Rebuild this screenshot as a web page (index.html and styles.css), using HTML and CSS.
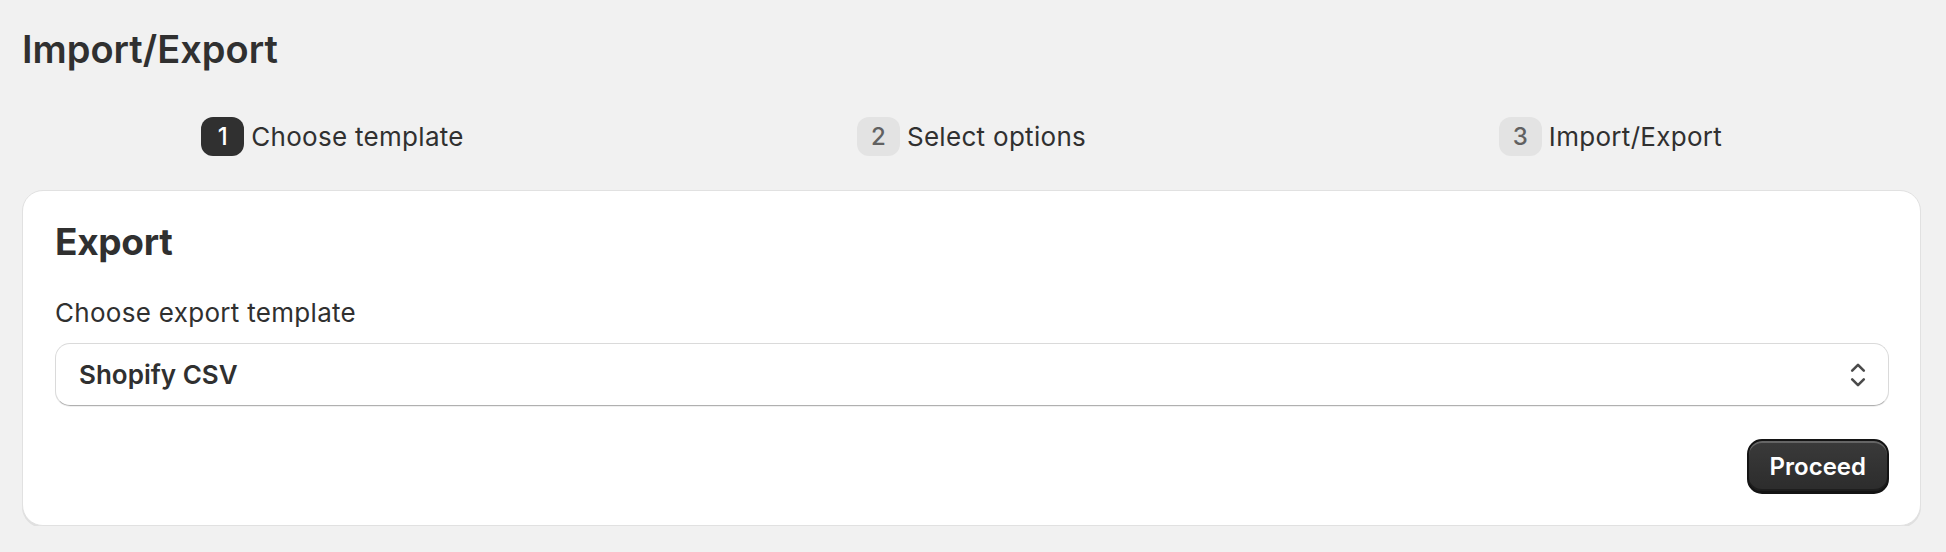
FILE: index.html
```html
<!DOCTYPE html>
<html lang="en">
<head>
<meta charset="utf-8">
<title>Import/Export</title>
<link rel="stylesheet" href="styles.css">
</head>
<body>
<main class="page">
  <h1 class="page-title">Import/Export</h1>
  <ol class="steps">
    <li class="step step-active"><span class="step-num">1</span><span class="step-label">Choose template</span></li>
    <li class="step"><span class="step-num">2</span><span class="step-label">Select options</span></li>
    <li class="step"><span class="step-num">3</span><span class="step-label">Import/Export</span></li>
  </ol>
  <section class="card">
    <h2 class="card-title">Export</h2>
    <label class="field-label" for="tpl">Choose export template</label>
    <div class="select" id="tpl">
      <span class="select-value">Shopify CSV</span>
      <svg class="select-icon" width="16" height="26" viewBox="0 0 16 26" aria-hidden="true">
        <polyline points="2.2,8.6 8,2.8 13.8,8.6" fill="none" stroke="#4a4a4a" stroke-width="2.6" stroke-linecap="round" stroke-linejoin="round"/>
        <polyline points="2.2,17.4 8,23.2 13.8,17.4" fill="none" stroke="#4a4a4a" stroke-width="2.6" stroke-linecap="round" stroke-linejoin="round"/>
      </svg>
    </div>
    <div class="actions">
      <button class="btn-primary" type="button">Proceed</button>
    </div>
  </section>
</main>
</body>
</html>
```

FILE: styles.css
```css
* { box-sizing: border-box; }

html, body {
  margin: 0;
  background: #f1f1f1;
}

body {
  font-family: Inter, "Noto Sans", "Liberation Sans", sans-serif;
  color: #303030;
}

.page {
  padding: 27px 25px 0 22px;
}

.page-title {
  margin: 0;
  font-size: 38px;
  line-height: 44px;
  font-weight: 600;
  color: #303030;
}

.steps {
  list-style: none;
  margin: 46px -9px 0 -9px;
  padding: 0;
  display: grid;
  grid-template-columns: repeat(3, 1fr);
}

.step {
  display: flex;
  align-items: center;
  justify-content: center;
  gap: 7px;
  height: 39px;
}

.step-num {
  display: flex;
  align-items: center;
  justify-content: center;
  width: 43px;
  height: 39px;
  border-radius: 12px;
  background: #e3e3e3;
  color: #616161;
  font-size: 24px;
  font-weight: 450;
}

.step-active .step-num {
  background: #303030;
  color: #ffffff;
}

.step-label {
  font-size: 26px;
  line-height: 34px;
  letter-spacing: 0.3px;
  color: #303030;
}

.card {
  margin-top: 34px;
  background: #ffffff;
  border: 1px solid #e1e1e1;
  border-radius: 21px;
  box-shadow: 0 2px 0 rgba(0, 0, 0, 0.07);
  padding: 29px 31px 31px 32px;
  display: flex;
  flex-direction: column;
}

.card-title {
  margin: 0;
  font-size: 37px;
  line-height: 44px;
  font-weight: 700;
  letter-spacing: -0.3px;
  color: #303030;
}

.field-label {
  margin-top: 32px;
  font-size: 26px;
  line-height: 34px;
  letter-spacing: 0.3px;
  color: #303030;
}

.select {
  margin-top: 13px;
  height: 63px;
  display: flex;
  align-items: center;
  justify-content: space-between;
  padding: 0 22px 0 23px;
  background: #ffffff;
  border: 1px solid #dadada;
  border-bottom-color: #b0b0b0;
  border-radius: 15px;
  box-shadow: 0 1px 0 rgba(0, 0, 0, 0.06);
}

.select-value {
  font-size: 26px;
  font-weight: 600;
  color: #303030;
}

.select-icon {
  display: block;
}

.actions {
  margin-top: 33px;
  display: flex;
  justify-content: flex-end;
}

.btn-primary {
  height: 55px;
  padding: 0 21px;
  font-family: inherit;
  font-size: 24px;
  font-weight: 600;
  color: #ffffff;
  background: linear-gradient(#3a3a3a, #2c2c2c);
  border: 2px solid #141414;
  border-bottom-width: 3px;
  border-radius: 15px;
  box-shadow: inset 0 2px 0 rgba(255, 255, 255, 0.22), inset 0 -2px 0 #1e1e1e;
  cursor: pointer;
}
```
